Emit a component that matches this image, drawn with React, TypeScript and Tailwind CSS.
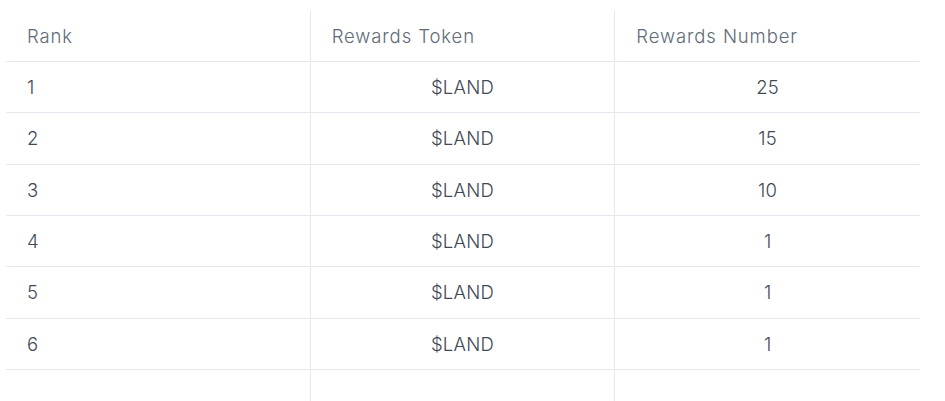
import React from "react";

const rows = [
  { rank: "1", token: "$LAND", num: "25", h: "h-[51px]" },
  { rank: "2", token: "$LAND", num: "15", h: "h-[52px]" },
  { rank: "3", token: "$LAND", num: "10", h: "h-[51px]" },
  { rank: "4", token: "$LAND", num: "1", h: "h-[51px]" },
  { rank: "5", token: "$LAND", num: "1", h: "h-[52px]" },
  { rank: "6", token: "$LAND", num: "1", h: "h-[51px]" },
];

export default function App() {
  return (
    <div className="w-[945px] h-[401px] overflow-hidden bg-white" style={{ fontFamily: "Inter, 'Noto Sans', sans-serif" }}>
      <div className="ml-[6px] mt-[11px] w-[914px] text-[18.5px] font-light tracking-[0.25px]">
        <div className="grid grid-cols-3 h-[51px] border-b border-[#e5e8ec] text-[#5f6b78] tracking-[0.9px]">
          <div className="border-r border-[#e5e8ec] pl-[21px] pt-[1px] flex items-center">Rank</div>
          <div className="border-r border-[#e5e8ec] pl-[21px] pt-[1px] flex items-center">Rewards Token</div>
          <div className="pl-[21px] pt-[1px] flex items-center">Rewards Number</div>
        </div>
        {rows.map((r) => (
          <div key={r.rank} className={`grid grid-cols-3 ${r.h} border-b border-[#e5e8ec] text-[#3f4854]`}>
            <div className="border-r border-[#e5e8ec] pl-[21px] pt-[1px] flex items-center">{r.rank}</div>
            <div className="border-r border-[#e5e8ec] pt-[1px] flex items-center justify-center">{r.token}</div>
            <div className="pt-[1px] flex items-center justify-center">{r.num}</div>
          </div>
        ))}
        <div className="grid grid-cols-3 h-[40px]">
          <div className="border-r border-[#e5e8ec]" />
          <div className="border-r border-[#e5e8ec]" />
          <div />
        </div>
      </div>
    </div>
  );
}
